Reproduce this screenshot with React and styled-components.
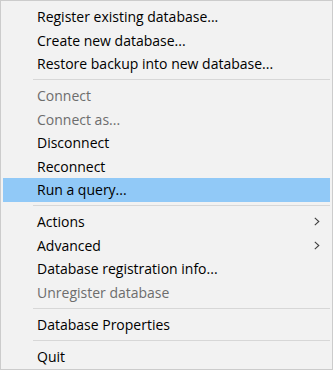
import styled, {createGlobalStyle} from 'styled-components';

const GlobalStyle = createGlobalStyle`
  html, body {
    margin: 0;
    padding: 0;
    background: #f2f2f2;
  }
`;

const sections = [
  [
    {label: 'Register existing database...'},
    {label: 'Create new database...'},
    {label: 'Restore backup into new database...'},
  ],
  [
    {label: 'Connect', disabled: true},
    {label: 'Connect as...', disabled: true},
    {label: 'Disconnect'},
    {label: 'Reconnect'},
    {label: 'Run a query...', active: true},
  ],
  [
    {label: 'Actions', submenu: true},
    {label: 'Advanced', submenu: true},
    {label: 'Database registration info...'},
    {label: 'Unregister database', disabled: true},
  ],
  [{label: 'Database Properties'}],
  [{label: 'Quit'}],
];

function Chevron() {
  return (
    <svg width="6" height="9" viewBox="0 0 6 9">
      <path d="M0.8 0.8 L4.8 4.5 L0.8 8.2" fill="none" stroke="#404040" strokeWidth="1.1" />
    </svg>
  );
}

function App() {
  return (
    <>
      <GlobalStyle />
      <Menu>
        {sections.map((items, i) => (
          <Section key={i}>
            {i > 0 && <Separator />}
            {items.map((item) => (
              <Item key={item.label} $active={item.active} $disabled={item.disabled}>
                <Label>{item.label}</Label>
                {item.submenu && (
                  <Arrow>
                    <Chevron />
                  </Arrow>
                )}
              </Item>
            ))}
          </Section>
        ))}
      </Menu>
    </>
  );
}

const Menu = styled.div`
  width: 333px;
  height: 370px;
  box-sizing: border-box;
  border: 1px solid #cccccc;
  background: #f2f2f2;
  padding: 4px 2px 0 2px;
  font-family: 'Segoe UI', 'Open Sans', sans-serif;
  font-size: 14px;
  overflow: hidden;
`;

const Section = styled.div`
  display: flex;
  flex-direction: column;
`;

const Separator = styled.div`
  height: 8.5px;
  display: flex;
  align-items: center;
  padding-left: 30px;

  &::after {
    content: '';
    flex: 1;
    height: 1px;
    background: #d7d7d7;
  }
`;

const Item = styled.div`
  height: 23.5px;
  display: flex;
  align-items: center;
  padding-left: 34px;
  background: ${(p) => (p.$active ? '#91c9f7' : 'transparent')};
  color: ${(p) => (p.$disabled ? '#6d6d6d' : '#000000')};
`;

const Label = styled.span`
  flex: 1;
  white-space: nowrap;
`;

const Arrow = styled.span`
  display: flex;
  align-items: center;
  width: 16px;
`;

export default App;
